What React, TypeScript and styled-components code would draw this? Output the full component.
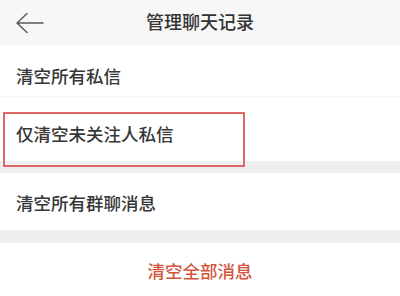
import React from "react";
import styled, { createGlobalStyle } from "styled-components";

const Global = createGlobalStyle`
  html, body { margin: 0; padding: 0; background: #ffffff; }
  body { font-family: "Noto Sans CJK SC", "Noto Sans", sans-serif; }
`;

const Page = styled.div`
  position: relative;
  width: 400px;
  height: 296px;
  overflow: hidden;
  background: #ffffff;
  display: flex;
  flex-direction: column;
`;

const Header = styled.header`
  height: 45px;
  flex: none;
  background: #f7f7f7;
  display: grid;
  grid-template-columns: 60px 1fr 60px;
  align-items: center;
`;

const BackButton = styled.div`
  display: flex;
  align-items: center;
  padding-left: 16px;
  height: 100%;
`;

const Title = styled.h1`
  margin: 0;
  text-align: center;
  font-size: 18px;
  font-weight: 500;
  color: #333333;
  line-height: 1;
  padding-bottom: 4px;
`;

const Row = styled.div<{ $h: number; $pt: number; $line?: boolean }>`
  height: ${(p) => p.$h}px;
  flex: none;
  box-sizing: border-box;
  padding: ${(p) => p.$pt}px 16px 0;
  font-size: 17.5px;
  font-weight: 500;
  line-height: 1;
  color: #363636;
  border-bottom: ${(p) => (p.$line ? "1px solid #f6f6f6" : "none")};
`;

const Band = styled.div<{ $h: number }>`
  height: ${(p) => p.$h}px;
  flex: none;
  background: #efefef;
`;

const Danger = styled.div`
  flex: 1;
  display: flex;
  justify-content: center;
  padding-top: 19px;
  font-size: 17.5px;
  font-weight: 500;
  line-height: 1;
  color: #d4553c;
`;

const Highlight = styled.div`
  position: absolute;
  left: 3px;
  top: 112px;
  width: 242px;
  height: 55px;
  box-sizing: border-box;
  border: 2px solid #e06666;
  pointer-events: none;
`;

export default function App() {
  return (
    <>
      <Global />
      <Page>
        <Header>
          <BackButton>
            <svg width="28" height="22" viewBox="0 0 28 22" fill="none">
              <path
                d="M1 11 H27 M11 1.5 L1 11 L11 20.5"
                stroke="#5a5a5a"
                strokeWidth="1.5"
                strokeLinecap="round"
                strokeLinejoin="round"
              />
            </svg>
          </BackButton>
          <Title>管理聊天记录</Title>
          <div />
        </Header>
        <Row $h={52} $pt={22} $line>清空所有私信</Row>
        <Row $h={64} $pt={28}>仅清空未关注人私信</Row>
        <Band $h={12} />
        <Row $h={57} $pt={21}>清空所有群聊消息</Row>
        <Band $h={13} />
        <Danger>清空全部消息</Danger>
        <Highlight />
      </Page>
    </>
  );
}
